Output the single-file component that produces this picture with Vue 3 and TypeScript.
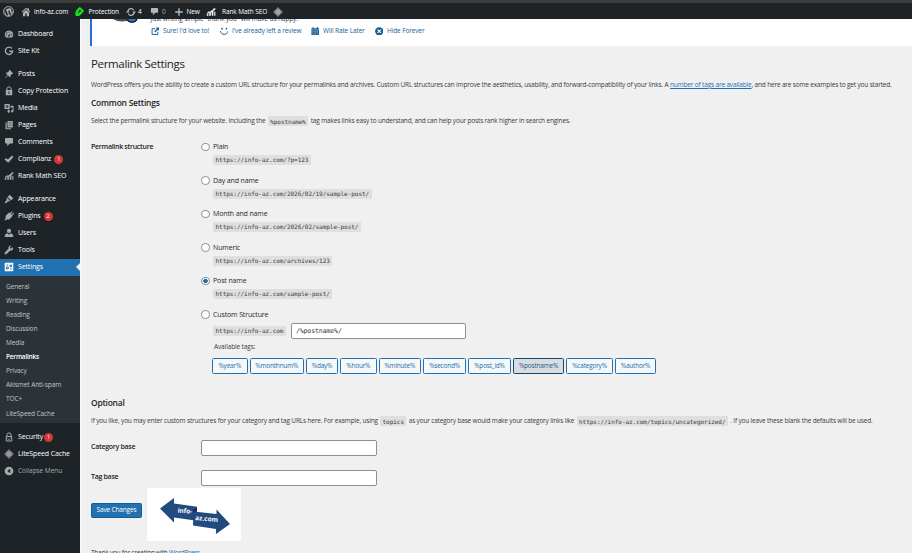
<script setup lang="ts">
import { h, type FunctionalComponent } from 'vue'

interface MenuItem { label: string; icon: string; badge?: number; current?: boolean }

const shapes: Record<string, string> = {
  wordpress: '<circle cx="10" cy="10" r="8.9" fill="none" stroke="currentColor" stroke-width="1.7"/><path d="M3.2 8.2h4.2l-.9.5 2.6 7.6 1.6-4.6-1.2-3-.9-.5h4.3l-.9.5 2.5 7.3 1.2-4.2c.4-1.6-.9-2.8-.9-4 0-.8.6-1.3 1.2-1.4a7.4 7.4 0 0 0-11.5 1.4z M3 9.2l3.9 8.4A7.6 7.6 0 0 1 3 9.2zM8 17.6l2.2-6.3 2.3 6.4c-1.5.5-3.1.4-4.5-.1zM13.500 17l3.1-8.800c1.700 3.200.6 6.900-3.100 8.800z"/>',
  home: '<path d="M10 1.500 1.500 9.500l1.300 1.300L10 4.200l7.200 6.600 1.300-1.300L16 7.100V2.500h-2.600v2.200z"/><path d="M10 6 4 11.400V18.500h4.500V13h3v5.500H16v-7.100z"/>',
  shield: '<g transform="rotate(42 10 10)"><path d="M5.500 1.500h9a1.500 1.500 0 0 1 1.500 1.500v8c0 4-2.500 7-6 9-3.500-2-6-5-6-9V3a1.500 1.500 0 0 1 1.500-1.500z"/><circle cx="10" cy="7" r="2" fill="#1d2327"/><path d="M9.200 8h1.600v5H9.200z" fill="#1d2327"/></g>',
  update: '<path d="M4 8a6.300 6.300 0 0 1 11.500-1.500M16 12a6.300 6.300 0 0 1-11.500 1.500" fill="none" stroke="currentColor" stroke-width="2.500"/><path d="M12.500 9h7.500L16.200 13.500zM0 11h7.500L3.800 6.500z"/>',
  comment: '<path d="M4 2h12a2 2 0 0 1 2 2v7a2 2 0 0 1-2 2h-4.500L6.500 18.500V13H4a2 2 0 0 1-2-2V4a2 2 0 0 1 2-2z"/>',
  plus: '<path d="M8.600 2.500h2.800v6.100h6.100v2.800h-6.100v6.100H8.600v-6.100H2.500V8.600h6.100z"/>',
  rank: '<path d="M1.500 13.500h3.300v4H1.500zM6.500 11h3.300v6.500H6.500zM11.500 8h3.300v9.500h-3.300z"/><path d="m2 11.500 4-3 2 .8 7-5.300-.8-1.200 4.800-.3-1 4.500-1-1.200-7 6-2.500-.8-4 2.300zM16.500 9.500h2.300v8h-2.300z"/>',
  diamond: '<path d="M10 0 20 10 10 20 0 10z" opacity=".55"/><path d="M10 3.500 16.500 10 10 16.500 3.500 10z" fill="none" stroke="currentColor" stroke-width="1.200"/><path d="M6 6h8v8H6z" opacity=".7"/>',
  dashboard: '<path d="M10 3a8.300 8.300 0 0 0-7.200 12.500l1 1.500h12.400l1-1.500A8.300 8.300 0 0 0 10 3z"/><g fill="#1d2327"><circle cx="10" cy="6" r="1.200"/><circle cx="6" cy="7.800" r="1.200"/><circle cx="4.700" cy="11.800" r="1.200"/><circle cx="15.300" cy="11.800" r="1.200"/><path d="m14.500 7-3.300 5.800a1.700 1.700 0 1 1-1.600-.9z"/></g>',
  google: '<path d="M15.800 5A7.300 7.300 0 1 0 17.300 10.500H10.500" fill="none" stroke="currentColor" stroke-width="2.800"/>',
  pin: '<path d="m11.200 1.500 7.300 7.300-1.400 1.400-1.200-.4-3 3c.5 1.600.2 3-.8 4l-4-4-5.900 5.500-.5-.5 5.500-5.900-4-4c1-1 2.400-1.300 4-.8l3-3-.4-1.200z"/>',
  lock: '<path d="M5.800 8V6a4.200 4.200 0 0 1 8.400 0v2" fill="none" stroke="currentColor" stroke-width="2"/><path d="M3.500 8h13v10.500h-13z"/><path d="M9 11h2v4.500H9z" fill="#1d2327"/>',
  media: '<path d="M1 2h10.500v10H1z"/><circle cx="6.200" cy="7" r="2.500" fill="#1d2327"/><circle cx="6.200" cy="7" r="1"/><path d="M13 5.500h6v11a2.400 2.400 0 1 1-2-2.300V9h-4zM7.500 13.500h4v4A2.200 2.200 0 1 1 7.500 16z"/>',
  pages: '<path d="M7 2h10.500v13H7z"/><path d="M5.500 5v11.500H14V18.500H3V5z"/><path d="M9 5h6.500M9 8h6.500M9 11h6.500" stroke="#1d2327" stroke-width=".7"/>',
  check: '<path d="m1 11 3-3 3.700 3.200L16.200 3 19 6 8.500 17.500z"/>',
  brush: '<path d="m11.500 1.500 7 7-4.500 4.500-7-7z"/><path d="m6 7.500 6 6-1.500 1.500-2.500-.5-4.500 4.300-2.200-2.200 4.200-4.600-.6-3z"/>',
  plug: '<path d="m11.500 4.500 4-4 1.700 1.700-3.700 4 1.500 1.500 3.700-4 1.500 1.700-4 4 .8.800-5.500 5.800c-2 1.500-4 1.500-5.500.5l-3 2.500L1 17l2.700-3c-1-2-.9-4 .8-5.700L10 3z"/>',
  user: '<circle cx="10" cy="5.800" r="4.200"/><path d="M7 10.500 10 13.500l3-3c3 .5 5.500 2.500 5.500 5.500v2H1.500V16c0-3 2.500-5 5.500-5.500z"/>',
  wrench: '<path d="M17.500 4.200 14.500 7l-2-.6-.5-2 2.800-2.900C12.300.7 9.500 2 9 4.700c-.2 1-.1 1.700.2 2.500l-7.300 7.600a2.200 2.200 0 0 0 3.200 3.300l7.500-7.300c2 .7 4.200 0 5.200-1.900.8-1.600.7-3.300-.3-4.700z"/>',
  settings: '<path d="M1.500 1.500h17v17h-17z"/><path d="M5 6h3.500M5 10h3.500v4H5zM12 6h3v3.500h-3zM12 14h3.500" fill="none" stroke="#2271b1" stroke-width="1.900"/>',
  padlock: '<path d="M5.800 9V6a4.200 4.200 0 0 1 8.400 0v3" fill="none" stroke="currentColor" stroke-width="2"/><path d="M4.500 9h11v9h-11z" fill="none" stroke="currentColor" stroke-width="2"/><path d="m7 13 2.500 2.500 4-4" fill="none" stroke="currentColor" stroke-width="1.600"/>',
  collapse: '<circle cx="10" cy="10" r="8.700"/><path d="M12.500 5.500v9L6.500 10z" fill="#1d2327"/>',
  external: '<path d="M10 4H2.500v13.500H16V11" fill="none" stroke="currentColor" stroke-width="2.200"/><path d="M11 1h8v8l-2.800-2.800-6.500 6.500-2-2L14 4z"/>',
  smiley: '<circle cx="5" cy="4" r="2"/><circle cx="15" cy="4" r="2"/><path d="M1 9.500c1 10.500 17 10.500 18 0" fill="none" stroke="currentColor" stroke-width="2.300"/>',
  calendar: '<path d="M1 3h18v16.500H1z"/><path d="M5 0v5M15 0v5" stroke="currentColor" stroke-width="2.400"/><path d="M1 7h18" stroke="#fff" stroke-width="1"/><path d="M3.500 10.500h13M3.500 13.500h13M3.500 16.500h13" stroke="#fff" stroke-width="1.200" stroke-dasharray="1.800 1.700"/>',
  dismiss: '<circle cx="10" cy="10" r="9.700"/><path d="m6 6 8 8M14 6l-8 8" stroke="#fff" stroke-width="2.600"/>'
}

const Icon: FunctionalComponent<{ name: string }> = (props) =>
  h('svg', { viewBox: '0 0 20 20', fill: 'currentColor', 'aria-hidden': 'true', innerHTML: shapes[props.name] })
Icon.props = ['name']

const bar = [
  { icon: 'wordpress', label: '' },
  { icon: 'home', label: 'info-az.com' },
  { icon: 'shield', label: 'Protection' },
  { icon: 'update', label: '4' },
  { icon: 'comment', label: '0' },
  { icon: 'plus', label: 'New' },
  { icon: 'rank', label: 'Rank Math SEO' },
  { icon: 'diamond', label: '' }
]

const groups: MenuItem[][] = [
  [{ label: 'Dashboard', icon: 'dashboard' }, { label: 'Site Kit', icon: 'google' }],
  [
    { label: 'Posts', icon: 'pin' },
    { label: 'Copy Protection', icon: 'lock' },
    { label: 'Media', icon: 'media' },
    { label: 'Pages', icon: 'pages' },
    { label: 'Comments', icon: 'comment' },
    { label: 'Complianz', icon: 'check', badge: 1 },
    { label: 'Rank Math SEO', icon: 'rank' }
  ],
  [
    { label: 'Appearance', icon: 'brush' },
    { label: 'Plugins', icon: 'plug', badge: 2 },
    { label: 'Users', icon: 'user' },
    { label: 'Tools', icon: 'wrench' },
    { label: 'Settings', icon: 'settings', current: true }
  ]
]
const submenu = ['General', 'Writing', 'Reading', 'Discussion', 'Media', 'Permalinks', 'Privacy', 'Akismet Anti-spam', 'TOC+', 'LiteSpeed Cache']
const tail: MenuItem[] = [
  { label: 'Security', icon: 'padlock', badge: 1 },
  { label: 'LiteSpeed Cache', icon: 'diamond' }
]

const noticeLinks = [
  { icon: 'external', label: "Sure! I'd love to!" },
  { icon: 'smiley', label: "I've already left a review" },
  { icon: 'calendar', label: 'Will Rate Later' },
  { icon: 'dismiss', label: 'Hide Forever' }
]

const site = 'https://info-az.com'
const options = [
  { label: 'Plain', path: '/?p=123' },
  { label: 'Day and name', path: '/2026/02/19/sample-post/' },
  { label: 'Month and name', path: '/2026/02/sample-post/' },
  { label: 'Numeric', path: '/archives/123' },
  { label: 'Post name', path: '/sample-post/' }
]
const tags = ['year', 'monthnum', 'day', 'hour', 'minute', 'second', 'post_id', 'postname', 'category', 'author']
</script>

<template>
  <div class="screen">
    <header class="adminbar">
      <template v-for="b in bar" :key="b.icon">
        <span class="bar-icon" :class="'bar-' + b.icon"><Icon :name="b.icon" /></span>
        <span v-if="b.label" class="bar-text" :class="{ dim: b.label === '0' }">{{ b.label }}</span>
      </template>
    </header>

    <div class="body">
      <nav class="sidebar">
        <ul v-for="(g, i) in groups" :key="i" class="menu">
          <li v-for="m in g" :key="m.label" class="menu-item" :class="{ current: m.current }">
            <span class="menu-icon"><Icon :name="m.icon" /></span>
            <span>{{ m.label }}</span>
            <span v-if="m.badge" class="badge">{{ m.badge }}</span>
          </li>
        </ul>
        <ul class="submenu">
          <li v-for="s in submenu" :key="s" :class="{ active: s === 'Permalinks' }">{{ s }}</li>
        </ul>
        <ul class="menu">
          <li v-for="m in tail" :key="m.label" class="menu-item">
            <span class="menu-icon"><Icon :name="m.icon" /></span>
            <span>{{ m.label }}</span>
            <span v-if="m.badge" class="badge tight">{{ m.badge }}</span>
          </li>
          <li class="menu-item collapse">
            <span class="menu-icon"><Icon name="collapse" /></span>
            <span>Collapse Menu</span>
          </li>
        </ul>
      </nav>

      <main class="content">
        <section class="notice">
          <svg class="avatar" viewBox="0 0 30 14" aria-hidden="true">
            <ellipse cx="12" cy="4" rx="12" ry="7.500" fill="#4a4f54" />
            <circle cx="22" cy="7" r="6" fill="#1d2327" />
            <circle cx="22" cy="7.500" r="4" fill="#2f6fd6" />
          </svg>
          <div class="notice-body">
            <p class="notice-text">Just writing simple "thank you" will make us happy.</p>
            <div class="notice-links">
              <a v-for="n in noticeLinks" :key="n.icon"><Icon :name="n.icon" />{{ n.label }}</a>
            </div>
          </div>
        </section>

        <div class="wrap">
          <h1>Permalink Settings</h1>
          <p class="intro">WordPress offers you the ability to create a custom URL structure for your permalinks and archives. Custom URL structures can improve the aesthetics, usability, and forward-compatibility of your links. A <a>number of tags are available</a>, and here are some examples to get you started.</p>
          <h2>Common Settings</h2>
          <p class="help">Select the permalink structure for your website. Including the <code>%postname%</code> tag makes links easy to understand, and can help your posts rank higher in search engines.</p>

          <div class="row structure">
            <div class="th">Permalink structure</div>
            <div>
              <div v-for="o in options" :key="o.label" class="option">
                <label><i class="radio" :class="{ on: o.label === 'Post name' }"></i>{{ o.label }}</label>
                <div class="sample"><code>{{ site + o.path }}</code></div>
              </div>
              <div class="custom">
                <label><i class="radio"></i>Custom Structure</label>
                <div class="custom-line"><code>{{ site }}</code><div class="field mono">/%postname%/</div></div>
                <p class="avail">Available tags:</p>
                <div class="tags">
                  <button v-for="t in tags" :key="t" type="button" :class="{ pressed: t === 'postname' }">%{{ t }}%</button>
                </div>
              </div>
            </div>
          </div>

          <h2 class="optional">Optional</h2>
          <p class="help">If you like, you may enter custom structures for your category and tag URLs here. For example, using <code>topics</code> as your category base would make your category links like <code>https://info-az.com/topics/uncategorized/</code> . If you leave these blank the defaults will be used.</p>

          <div class="row base"><div class="th">Category base</div><div class="field"></div></div>
          <div class="row base"><div class="th">Tag base</div><div class="field"></div></div>

          <div class="submit">
            <button type="button" class="save">Save Changes</button>
            <svg class="logo" viewBox="0 0 94 53" role="img" aria-label="info-az.com">
              <rect width="94" height="53" fill="#fff" />
              <path d="M13 20.500 27 10v5.500l23 3.200v14L27 29.500V34.500z" fill="#204a80" />
              <path d="M46 24.500l4-2v-3.500l-3.500 3z" fill="#15294a" />
              <path d="M46.500 23.500 69.500 26V21.500L83 36 69 46V41l-23-3.500z" fill="#204a80" />
              <text x="30.500" y="24.500" transform="rotate(5 30.500 24.500)" textLength="14.500">info-</text>
              <text x="48" y="32" transform="rotate(5 48 32)" textLength="23">az.com</text>
            </svg>
          </div>
          <p class="footer">Thank you for creating with <a>WordPress</a>.</p>
        </div>
      </main>
    </div>
  </div>
</template>

<style>
body { margin: 0; overflow: hidden; }
</style>

<style scoped>
.screen { width: 912px; height: 553px; overflow: hidden; background: #f0f0f1; color: #353c42; font: 6.5px/10px "Open Sans", "Noto Sans", sans-serif; display: flex; flex-direction: column; }
p, h1, h2, ul { margin: 0; padding: 0; }
ul { list-style: none; }
svg { display: block; }

.adminbar { flex: none; box-sizing: border-box; height: 19px; border-top: 3px solid #3c3c3c; background: #1d2327; color: #fff; padding-left: 3px; display: grid; grid-template-columns: 18px 13px 40px 14.500px 37px 12.500px 12px 12px 12px 12.500px 19.500px 16px 51px 12px; align-items: center; }
.adminbar > * { position: relative; top: .7px; }
.bar-icon { color: #b4b7ba; }
.bar-icon svg { width: 10px; height: 10px; }
.bar-wordpress svg { width: 11px; height: 11px; }
.bar-shield { color: #1fe01f; }
.bar-comment svg { width: 9px; height: 9px; }
.bar-rank { color: #f0f0f1; }
.bar-text { letter-spacing: -.1px; white-space: nowrap; }
.dim { color: #a7aaad; }

.body { flex: 1; min-height: 0; display: flex; }
.sidebar { flex: none; width: 80px; padding-top: 6.300px; box-sizing: border-box; background: #1d2327; }
.menu { margin-bottom: 5.400px; font-size: 7px; letter-spacing: -.13px; color: #fff; white-space: nowrap; }
.menu:nth-of-type(3) { margin-bottom: 0; }
.menu-item { position: relative; height: 17.150px; display: flex; align-items: center; }
.menu-icon { flex: none; width: 14px; padding-left: 4px; color: #a7aaad; }
.menu-icon svg { width: 10px; height: 10px; }
.current { background: #2271b1; color: #fff; }
.current .menu-icon { color: #fff; }
.current::after { content: ""; position: absolute; right: 0; top: 4.500px; border: 4px solid transparent; border-left: 0; border-right-color: #f0f0f1; }
.badge { margin: 1px 0 0 3px; width: 9px; height: 9px; border-radius: 50%; background: #d63638; color: #fff; font-size: 5.500px; line-height: 9px; text-align: center; letter-spacing: 0; }
.badge.tight { margin-left: 1px; }
.collapse { font-size: 6.500px; color: #a7aaad; letter-spacing: -.05px; }
.submenu { padding: 3.700px 0 2.800px 6px; margin-bottom: 4.500px; background: #2c3338; color: #c3c4c7; letter-spacing: -.1px; }
.submenu li { height: 14.100px; line-height: 14.100px; }
.submenu .active { color: #fff; font-weight: 600; letter-spacing: -.22px; }

.content { flex: 1; min-width: 0; border-left: 1px solid #fafafa; }
.notice { box-sizing: border-box; margin-left: 9px; height: 27px; overflow: hidden; background: #fff; border-left: 2px solid #2271d1; display: flex; }
.avatar { flex: none; width: 30px; height: 14px; margin: -9px 0 0 18px; }
.notice-body { padding-left: 10.500px; margin-top: -5px; white-space: nowrap; }
.notice-text { line-height: 10px; height: 11px; letter-spacing: -.12px; }
.notice-links { display: grid; grid-template-columns: 69px 91px 64px auto; height: 12px; align-items: center; color: #135e96; letter-spacing: -.12px; }
.notice-links a { display: flex; align-items: center; }
.notice-links svg { width: 8.500px; height: 8.500px; margin-right: 4px; }

.wrap { padding-left: 10px; white-space: nowrap; }
h1 { margin-top: 10px; font-size: 11.500px; line-height: 16px; font-weight: 400; color: #1d2327; letter-spacing: -.34px; }
h2 { font-size: 8.450px; line-height: 12px; font-weight: 600; color: #1d2327; letter-spacing: -.23px; margin-top: 7px; }
.intro { margin-top: 8px; letter-spacing: -.17px; }
.intro a, .footer a { color: #2271b1; text-decoration: underline; }
.help { margin-top: 6px; line-height: 11px; height: 11px; letter-spacing: -.17px; }
code { font: 6px/10px "DejaVu Sans Mono", monospace; letter-spacing: -.04px; background: #dfdfe0; padding: 1.500px 2.500px; margin: 0 .7px; color: #353c42; }
.row { display: grid; grid-template-columns: 110px 1fr; }
.th { font-size: 7px; line-height: 12px; font-weight: 600; color: #1d2327; letter-spacing: -.29px; }
.structure { margin-top: 15px; }
.option { height: 33.500px; }
label { display: flex; align-items: center; height: 12px; font-size: 7px; letter-spacing: -.13px; color: #23292e; }
.radio { box-sizing: border-box; width: 8.500px; height: 8.500px; margin-right: 3.500px; border: 1px solid #8c8f94; border-radius: 50%; background: #fff; }
.radio.on { background: radial-gradient(circle, #2271b1 0 2px, #fff 2.500px); }
.sample { display: flex; margin: 2px 0 0 12px; height: 10px; }
.sample code, .custom-line code { display: block; line-height: 10px; padding: 0 2.500px; margin: 0; }
.custom-line { display: flex; align-items: center; margin: 2.500px 0 0 12px; height: 16px; }
.field { box-sizing: border-box; width: 176px; height: 16px; border: 1px solid #8c8f94; border-radius: 2px; background: #fff; color: #2c3338; }
.field.mono { width: 175px; margin-left: 5px; padding-left: 4px; font: 6.500px/14px "DejaVu Sans Mono", monospace; letter-spacing: -.09px; }
.avail { margin: 1.500px 0 0 13px; line-height: 11px; letter-spacing: -.12px; }
.tags { margin: 6.500px 0 0 11px; display: grid; grid-template-columns: 35.500px 54.500px 32px 36.500px 42.500px 43px 43px 51px 47px 41px; column-gap: 2px; }
.tags button { box-sizing: border-box; height: 16px; padding: 0; border: 1px solid #2271b1; border-radius: 1.500px; background: #f6f7f7; color: #2271b1; font: inherit; letter-spacing: -.22px; }
.tags .pressed { background: #dcdcde; border-color: #0a4b78; color: #135e96; }
.optional { margin-top: 23px; }
.base { margin-top: 14px; align-items: center; }
.base .th { position: relative; top: -.7px; }
.submit { display: flex; height: 53px; margin-top: 2px; }
.save { box-sizing: border-box; width: 51px; height: 15.500px; margin: 14.500px 5px 0 0; padding: 0; border: 1px solid #135e96; border-radius: 1.500px; background: #2271b1; color: #fff; font: inherit; letter-spacing: -.16px; }
.logo { width: 94px; height: 53px; }
.logo text { font: 700 6.500px "Open Sans", sans-serif; fill: #fff; }
.footer { margin-top: 7px; letter-spacing: -.23px; }
</style>
